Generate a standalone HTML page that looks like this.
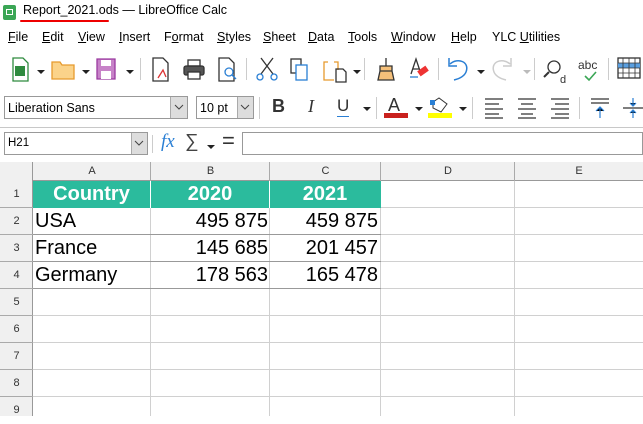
<!DOCTYPE html>
<html><head><meta charset="utf-8"><style>
*{margin:0;padding:0;box-sizing:border-box}
body{width:643px;height:416px;overflow:hidden;background:#fff;font-family:"Liberation Sans",sans-serif;position:relative;color:#000}
.a{position:absolute}
.m{position:absolute;top:30px;font-size:12.5px}
.hdr{position:absolute;background:#f0f0f0;font-size:11px;color:#333;text-align:center}
.vl{position:absolute;width:1px;background:#d0d0d0}
.hl{position:absolute;height:1px;background:#d0d0d0}
.cell{position:absolute;font-size:20px;line-height:27px}
.dd{position:absolute;width:0;height:0;border-left:4px solid transparent;border-right:4px solid transparent;border-top:4px solid #222}
.sep{position:absolute;width:1px;height:22px;background:#ccc}
</style></head><body>
<!-- title -->
<div class="a" style="left:3px;top:5px;width:13px;height:15px;background:#3aa655;border-radius:2px"></div>
<div class="a" style="left:6px;top:9px;width:7px;height:6px;border:1px solid #fff"></div>
<div class="a" style="left:23px;top:3px;font-size:12.5px">Report_2021.ods — LibreOffice Calc</div>
<div class="a" style="left:20px;top:20px;width:89px;height:2px;background:#e00;border-radius:1px"></div>
<!-- menu -->
<div class="m" style="left:8px"><u>F</u>ile</div>
<div class="m" style="left:42px"><u>E</u>dit</div>
<div class="m" style="left:78px"><u>V</u>iew</div>
<div class="m" style="left:119px"><u>I</u>nsert</div>
<div class="m" style="left:164px">F<u>o</u>rmat</div>
<div class="m" style="left:217px"><u>S</u>tyles</div>
<div class="m" style="left:263px"><u>S</u>heet</div>
<div class="m" style="left:308px"><u>D</u>ata</div>
<div class="m" style="left:348px"><u>T</u>ools</div>
<div class="m" style="left:391px"><u>W</u>indow</div>
<div class="m" style="left:451px"><u>H</u>elp</div>
<div class="m" style="left:492px">YLC <u>U</u>tilities</div>
<!-- toolbar1 -->
<svg class="a" style="left:0;top:52px" width="643" height="36">
<g fill="none" stroke-width="1.3">
<path d="M13 6h10l5 5v18H13z" stroke="#2e8b3e"/><rect x="15" y="14" width="10" height="10" fill="#2e8b3e" stroke="none"/>
<path d="M52 10h8l2 3h12v14H52z" stroke="#e69a2e" fill="#fbd38a"/>
<path d="M97 7h18v20H97z" stroke="#9b3aa0" fill="#c783c8"/><rect x="101" y="8" width="10" height="6" fill="#fff" stroke="none"/><rect x="101" y="19" width="10" height="8" fill="#fff" stroke="none"/>
<path d="M153 6h10l5 5v18h-15z" stroke="#333"/><path d="M158 26l5-8 3 7" stroke="#d33"/>
<rect x="184" y="14" width="20" height="9" rx="2" stroke="#333" fill="#555"/><rect x="188" y="8" width="12" height="6" stroke="#333"/><rect x="188" y="20" width="12" height="7" stroke="#333" fill="#fff"/>
<path d="M219 6h10l5 5v18h-15z" stroke="#333"/><circle cx="229" cy="20" r="4" stroke="#2a7fd4"/><path d="M232 23l4 4" stroke="#2a7fd4"/>
<path d="M261 6l12 16M273 6l-12 16" stroke="#333"/><circle cx="260" cy="25" r="3" stroke="#2a7fd4"/><circle cx="274" cy="25" r="3" stroke="#2a7fd4"/>
<rect x="291" y="7" width="10" height="14" stroke="#333"/><rect x="296" y="13" width="11" height="15" fill="#fff" stroke="#2a7fd4"/>
<path d="M328 10h-4v18h10M334 10h4v8" stroke="#e69a2e"/><path d="M336 17h7l3 3v10h-10z" stroke="#333"/>
<path d="M386 6v8M380 14h12v5h-12zM380 19l-2 9h16l-2-9" stroke="#333" fill="#f5c07a"/>
<path d="M411 22l5-15 5 15M413 17h6" stroke="#333"/><rect x="418" y="16" width="10" height="6" transform="rotate(-35 423 19)" fill="#e33" stroke="none"/><path d="M410 25h8" stroke="#2a7fd4"/>
<path d="M450 12c8-7 20-2 16 8-2 5-8 7-12 8" stroke="#2a7fd4" stroke-width="1.5"/><path d="M449 6v8h8" stroke="#2a7fd4" stroke-width="1.5"/>
<path d="M510 12c-8-7-20-2-16 8 2 5 8 7 12 8M511 6v8h-8" stroke="#ccc" stroke-width="1.5"/>
<circle cx="554" cy="15" r="6" stroke="#333"/><path d="M549 20l-5 5" stroke="#333" stroke-width="2"/><text x="560" y="31" font-size="11" fill="#333" font-family="Liberation Sans">d</text>
<text x="578" y="17" font-size="12" fill="#333" font-family="Liberation Sans">abc</text><path d="M585 24l4 4 7-8" stroke="#3aa655" stroke-width="1.6"/>
<rect x="618" y="6" width="22" height="20" stroke="#333"/><rect x="618" y="11" width="22" height="5" fill="#5a9fe0" stroke="none"/><path d="M618 11h22M618 16h22M618 21h22M623 6v20M629 6v20M635 6v20" stroke="#333" stroke-width=".8"/>
</g></svg>
<div class="dd" style="left:37px;top:70px"></div><div class="dd" style="left:82px;top:70px"></div><div class="dd" style="left:126px;top:70px"></div>
<div class="dd" style="left:353px;top:70px"></div><div class="dd" style="left:477px;top:70px"></div><div class="dd" style="left:523px;top:70px;border-top-color:#bbb"></div>
<div class="sep" style="left:140px;top:58px"></div><div class="sep" style="left:246px;top:58px"></div><div class="sep" style="left:364px;top:58px"></div><div class="sep" style="left:438px;top:58px"></div><div class="sep" style="left:534px;top:58px"></div><div class="sep" style="left:608px;top:58px"></div>
<!-- toolbar2 -->
<div class="a" style="left:4px;top:96px;width:184px;height:23px;border:1px solid #999;background:#fff;font-size:12.5px;padding:4px 3px">Liberation Sans</div>
<div class="a" style="left:170px;top:97px;width:17px;height:21px;background:#ddd;border-left:1px solid #aaa"></div>
<svg class="a" style="left:174px;top:104px" width="10" height="6"><path d="M1 1l4 4 4-4" fill="none" stroke="#444"/></svg>
<div class="a" style="left:196px;top:96px;width:58px;height:23px;border:1px solid #999;background:#fff;font-size:12.5px;padding:4px 3px">10 pt</div>
<div class="a" style="left:237px;top:97px;width:16px;height:21px;background:#ddd;border-left:1px solid #aaa"></div>
<svg class="a" style="left:240px;top:104px" width="10" height="6"><path d="M1 1l4 4 4-4" fill="none" stroke="#444"/></svg>
<div class="sep" style="left:259px;top:97px"></div>
<div class="a" style="left:272px;top:96px;font-size:18px;font-weight:bold;color:#333">B</div>
<div class="a" style="left:308px;top:96px;font-size:18px;font-style:italic;font-family:'Liberation Serif',serif;color:#333">I</div>
<div class="a" style="left:337px;top:96px;font-size:17px;color:#333">U</div>
<div class="a" style="left:337px;top:116px;width:12px;height:1px;background:#2a7fd4"></div>
<div class="dd" style="left:363px;top:107px"></div>
<div class="sep" style="left:376px;top:97px"></div>
<div class="a" style="left:388px;top:95px;font-size:18px;color:#333">A</div>
<div class="a" style="left:384px;top:113px;width:24px;height:5px;background:#c9211e"></div>
<div class="dd" style="left:415px;top:107px"></div>
<svg class="a" style="left:427px;top:96px" width="26" height="18"><path d="M6 6l6-4 8 6-6 8-8-4z" fill="#fff" stroke="#333"/><rect x="3" y="4" width="5" height="5" fill="#2a7fd4"/></svg>
<div class="a" style="left:428px;top:113px;width:24px;height:5px;background:#ffff00"></div>
<div class="dd" style="left:459px;top:107px"></div>
<div class="sep" style="left:472px;top:97px"></div>
<svg class="a" style="left:480px;top:96px" width="163" height="24"><g stroke="#333" stroke-width="1.2">
<path d="M5 3h18M5 8h14M5 13h18M5 18h14M5 22h18"/>
<path d="M38 3h18M41 8h12M38 13h18M41 18h12M38 22h18"/>
<path d="M71 3h18M75 8h14M71 13h18M75 18h14M71 22h18"/>
<path d="M111 3h18M111 7h18"/><path d="M120 22v-11M116 15l4-4 4 4" stroke="#2a7fd4"/>
<path d="M143 12h20"/><path d="M153 2v8M150 7l3 3 3-3M153 22v-8M150 17l3-3 3 3" stroke="#2a7fd4"/>
</g></svg>
<div class="sep" style="left:579px;top:97px"></div>
<div class="a" style="left:0;top:127px;width:643px;height:1px;background:#c8c8c8"></div>
<!-- formula bar -->
<div class="a" style="left:4px;top:132px;width:144px;height:23px;border:1px solid #999;background:#fff;font-size:11.5px;padding:4px 3px">H21</div>
<div class="a" style="left:131px;top:133px;width:16px;height:21px;background:#ddd;border-left:1px solid #aaa"></div>
<svg class="a" style="left:134px;top:140px" width="10" height="6"><path d="M1 1l4 4 4-4" fill="none" stroke="#444"/></svg>
<div class="a" style="left:152px;top:135px;width:1px;height:18px;background:#ccc"></div>
<div class="a" style="left:161px;top:131px;font-size:19px;font-style:italic;font-family:'Liberation Serif',serif;color:#2a7fd4">fx</div>
<div class="a" style="left:185px;top:131px;font-size:19px;color:#444">∑</div>
<div class="dd" style="left:207px;top:145px"></div>
<div class="a" style="left:222px;top:128px;font-size:22px;color:#333">=</div>
<div class="a" style="left:242px;top:132px;width:401px;height:23px;border:1px solid #999;background:#fff"></div>
<!-- grid headers -->
<div class="hdr" style="left:0;top:162px;width:643px;height:19px;border-bottom:1px solid #999"></div>
<div class="hdr" style="left:0;top:162px;width:33px;height:254px;border-right:1px solid #999"></div>
<div class="a" style="left:33px;top:162px;width:118px;font-size:11px;color:#333;text-align:center;line-height:19px">A</div>
<div class="a" style="left:151px;top:162px;width:119px;font-size:11px;color:#333;text-align:center;line-height:19px">B</div>
<div class="a" style="left:270px;top:162px;width:111px;font-size:11px;color:#333;text-align:center;line-height:19px">C</div>
<div class="a" style="left:381px;top:162px;width:134px;font-size:11px;color:#333;text-align:center;line-height:19px">D</div>
<div class="a" style="left:515px;top:162px;width:128px;font-size:11px;color:#333;text-align:center;line-height:19px">E</div>
<div class="a" style="left:150px;top:162px;width:1px;height:19px;background:#aaa"></div>
<div class="a" style="left:269px;top:162px;width:1px;height:19px;background:#aaa"></div>
<div class="a" style="left:380px;top:162px;width:1px;height:19px;background:#aaa"></div>
<div class="a" style="left:514px;top:162px;width:1px;height:19px;background:#aaa"></div>
<!-- row numbers -->
<div class="a" style="left:0;top:181px;width:33px;font-size:11px;color:#333;text-align:center;line-height:27px">1<br>2<br>3<br>4<br>5<br>6<br>7<br>8<br>9</div>
<div class="a" style="left:0;top:207px;width:33px;height:1px;background:#aaa"></div>
<div class="a" style="left:0;top:234px;width:33px;height:1px;background:#aaa"></div>
<div class="a" style="left:0;top:261px;width:33px;height:1px;background:#aaa"></div>
<div class="a" style="left:0;top:288px;width:33px;height:1px;background:#aaa"></div>
<div class="a" style="left:0;top:315px;width:33px;height:1px;background:#aaa"></div>
<div class="a" style="left:0;top:342px;width:33px;height:1px;background:#aaa"></div>
<div class="a" style="left:0;top:369px;width:33px;height:1px;background:#aaa"></div>
<div class="a" style="left:0;top:396px;width:33px;height:1px;background:#aaa"></div>
<!-- grid lines -->
<div class="vl" style="left:150px;top:181px;height:235px"></div>
<div class="vl" style="left:269px;top:181px;height:235px"></div>
<div class="vl" style="left:380px;top:181px;height:235px"></div>
<div class="vl" style="left:514px;top:181px;height:235px"></div>
<div class="hl" style="left:33px;top:207px;width:610px"></div>
<div class="hl" style="left:33px;top:234px;width:610px"></div>
<div class="hl" style="left:33px;top:261px;width:610px"></div>
<div class="hl" style="left:33px;top:288px;width:610px"></div>
<div class="hl" style="left:33px;top:315px;width:610px"></div>
<div class="hl" style="left:33px;top:342px;width:610px"></div>
<div class="hl" style="left:33px;top:369px;width:610px"></div>
<div class="hl" style="left:33px;top:396px;width:610px"></div>
<div class="a" style="left:33px;top:234px;width:348px;height:1px;background:#999"></div>
<div class="a" style="left:33px;top:261px;width:348px;height:1px;background:#999"></div>
<div class="a" style="left:33px;top:288px;width:348px;height:1px;background:#999"></div>
<!-- header row -->
<div class="a" style="left:33px;top:181px;width:348px;height:27px;background:#2bbb9d"></div>
<div class="a" style="left:150px;top:181px;width:1px;height:27px;background:#fff"></div>
<div class="a" style="left:269px;top:181px;width:1px;height:27px;background:#fff"></div>
<div class="cell" style="left:33px;top:181px;width:117px;text-align:center;color:#fff;font-weight:bold">Country</div>
<div class="cell" style="left:151px;top:181px;width:118px;text-align:center;color:#fff;font-weight:bold">2020</div>
<div class="cell" style="left:270px;top:181px;width:110px;text-align:center;color:#fff;font-weight:bold">2021</div>
<div class="cell" style="left:35px;top:208px">USA</div>
<div class="cell" style="left:35px;top:235px">France</div>
<div class="cell" style="left:35px;top:262px">Germany</div>
<div class="cell" style="left:151px;top:208px;width:117px;text-align:right">495 875</div>
<div class="cell" style="left:151px;top:235px;width:117px;text-align:right">145 685</div>
<div class="cell" style="left:151px;top:262px;width:117px;text-align:right">178 563</div>
<div class="cell" style="left:270px;top:208px;width:108px;text-align:right">459 875</div>
<div class="cell" style="left:270px;top:235px;width:108px;text-align:right">201 457</div>
<div class="cell" style="left:270px;top:262px;width:108px;text-align:right">165 478</div>
</body></html>
